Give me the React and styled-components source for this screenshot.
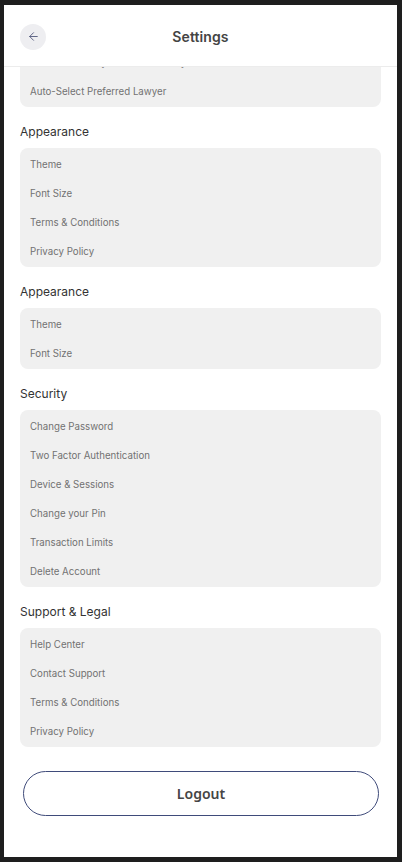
import React, { useLayoutEffect, useRef } from "react";
import styled, { createGlobalStyle } from "styled-components";
import { ArrowLeft } from "lucide-react";

const Global = createGlobalStyle`
  html, body { margin: 0; padding: 0; background: #1e1e1e; }
  body { font-family: Inter, "Noto Sans", sans-serif; }
  * { box-sizing: border-box; }
`;

const Frame = styled.div`
  width: 402px;
  height: 862px;
  padding: 5px 5px 5px 4px;
  background: #1e1e1e;
`;

const Screen = styled.div`
  width: 393px;
  height: 852px;
  background: #ffffff;
  display: flex;
  flex-direction: column;
  overflow: hidden;
`;

const Header = styled.header`
  flex: 0 0 auto;
  height: 62px;
  padding: 2px 16px 0;
  border-bottom: 1px solid #ececec;
  display: grid;
  grid-template-columns: 26px 1fr 26px;
  align-items: center;
`;

const BackButton = styled.button`
  width: 26px;
  height: 26px;
  border-radius: 50%;
  border: none;
  padding: 0;
  background: #eeeef1;
  color: #4b5277;
  display: flex;
  align-items: center;
  justify-content: center;
`;

const Title = styled.h1`
  margin: 0;
  text-align: center;
  font-size: 14px;
  font-weight: 600;
  color: #444444;
  letter-spacing: 0.1px;
`;

const Scroll = styled.main`
  flex: 1 1 auto;
  overflow-y: auto;
  scrollbar-width: none;
  &::-webkit-scrollbar { display: none; }
`;

const Content = styled.div`
  padding: 0 16px 41px;
`;

const Section = styled.section`
  margin-top: 17px;
`;

const SectionTitle = styled.h2`
  margin: 0 0 8px;
  height: 16px;
  line-height: 16px;
  font-size: 12px;
  font-weight: 400;
  color: #333333;
`;

const Card = styled.div`
  background: #f0f0f0;
  border-radius: 8px;
  padding: 2px 0 1px;
`;

const Row = styled.div`
  height: 29px;
  line-height: 29px;
  padding: 0 10px;
  font-size: 9.7px;
  color: #727272;
`;

const LogoutButton = styled.button`
  display: block;
  width: 356px;
  height: 45px;
  margin: 24px 0 0 3px;
  border: 1px solid #3f4b7a;
  border-radius: 23px;
  background: #ffffff;
  font-family: "Noto Sans", sans-serif;
  font-size: 14px;
  font-weight: 600;
  color: #454545;
`;

const sections = [
  {
    title: "Preferences",
    items: ["Default Consultation Type", "Remember Lawyer Search History", "Auto-Select Preferred Lawyer"],
  },
  { title: "Appearance", items: ["Theme", "Font Size", "Terms & Conditions", "Privacy Policy"] },
  { title: "Appearance", items: ["Theme", "Font Size"] },
  {
    title: "Security",
    items: [
      "Change Password",
      "Two Factor Authentication",
      "Device & Sessions",
      "Change your Pin",
      "Transaction Limits",
      "Delete Account",
    ],
  },
  {
    title: "Support & Legal",
    items: ["Help Center", "Contact Support", "Terms & Conditions", "Privacy Policy"],
  },
];

export default function App() {
  const ref = useRef(null);
  useLayoutEffect(() => {
    if (ref.current) ref.current.scrollTop = ref.current.scrollHeight;
  }, []);
  return (
    <Frame>
      <Global />
      <Screen>
        <Header>
          <BackButton aria-label="Back">
            <ArrowLeft size={13} strokeWidth={1.6} />
          </BackButton>
          <Title>Settings</Title>
          <span />
        </Header>
        <Scroll ref={ref}>
          <Content>
            {sections.map((s, i) => (
              <Section key={i}>
                <SectionTitle>{s.title}</SectionTitle>
                <Card>
                  {s.items.map((it, j) => (
                    <Row key={j}>{it}</Row>
                  ))}
                </Card>
              </Section>
            ))}
            <LogoutButton>Logout</LogoutButton>
          </Content>
        </Scroll>
      </Screen>
    </Frame>
  );
}
